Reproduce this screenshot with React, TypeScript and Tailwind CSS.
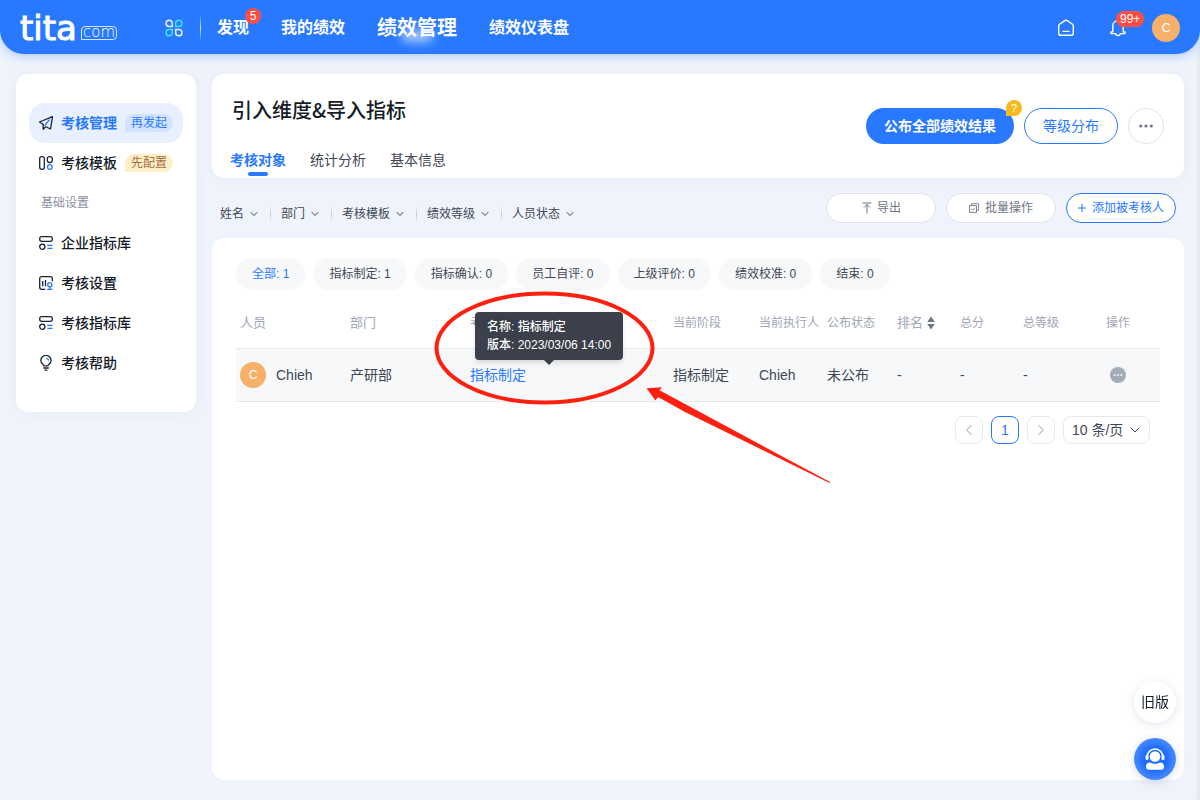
import React from 'react';
import { ChevronDown, ChevronLeft, ChevronRight } from 'lucide-react';

const navItems = [
    { name: '发现', badge: '5' },
    { name: '我的绩效' },
    { name: '绩效管理', active: true },
    { name: '绩效仪表盘' },
];

const filters = [
    { name: '姓名', width: 'w-10' },
    { name: '部门', width: 'w-10' },
    { name: '考核模板', width: 'w-16' },
    { name: '绩效等级', width: 'w-16' },
    { name: '人员状态', width: 'w-16' },
];

const stages = [
    { name: '全部', count: 1 },
    { name: '指标制定', count: 1 },
    { name: '指标确认', count: 0 },
    { name: '员工自评', count: 0 },
    { name: '上级评价', count: 0 },
    { name: '绩效校准', count: 0 },
    { name: '结束', count: 0 },
];

// Icons
const AppsIcon = () => (
    <svg width="18" height="18" viewBox="0 0 18 18" fill="none" strokeWidth="1.5">
        <path d="M4.2 1.2a3.1 3.1 0 1 0 0 6.3h3.1V4.3a3.1 3.1 0 0 0-3.1-3.1z" stroke="#e8f0ff" />
        <path d="M13.8 1.2a3.1 3.1 0 1 1 0 6.3h-3.1V4.3a3.1 3.1 0 0 1 3.1-3.1z" stroke="#3fe0ff" />
        <path d="M4.2 16.8a3.1 3.1 0 1 1 0-6.3h3.1v3.2a3.1 3.1 0 0 1-3.1 3.1z" stroke="#3fe0ff" />
        <path d="M13.8 16.8a3.1 3.1 0 1 0 0-6.3h-3.1v3.2a3.1 3.1 0 0 0 3.1 3.1z" stroke="#e8f0ff" />
    </svg>
);

const HomeIcon = () => (
    <svg width="18" height="18" viewBox="0 0 18 18" fill="none" stroke="#fff" strokeWidth="1.4" strokeLinecap="round" strokeLinejoin="round">
        <path d="M1.7 6.9c0-.7.3-1.2.8-1.6l5.3-3.7c.7-.5 1.7-.5 2.4 0l5.3 3.7c.5.4.8.9.8 1.6v7.3c0 1.2-.9 2.1-2.1 2.1H3.8c-1.2 0-2.1-.9-2.1-2.1z" />
        <path d="M6 12.4h6" />
    </svg>
);

const BellIcon = () => (
    <svg width="18" height="18" viewBox="0 0 18 18" fill="none" stroke="#fff" strokeWidth="1.4" strokeLinecap="round" strokeLinejoin="round">
        <path d="M9 1.8c-3 0-5.200 2.200-5.200 5v6L2 13v1.600h4.600c.3 1.400 1.200 2 2.400 2s2.100-.6 2.400-2H16V13l-1.800-.2v-6c0-2.800-2.200-5-5.200-5z" />
    </svg>
);

const PlaneIcon = () => (
    <svg width="16" height="16" viewBox="0 0 16 16" fill="none" stroke="#1b2333" strokeWidth="1.3" strokeLinejoin="round" strokeLinecap="round">
        <path d="M5 9.300 1.400 7 14.500 1.700l-2 12.300-4-2" />
        <path d="M5.200 9.500v4.800l2.300-2.300" />
        <path d="m11.200 5-4.200 5.200" stroke="#2879ff" />
    </svg>
);

const TemplateIcon = () => (
    <svg width="16" height="16" viewBox="0 0 16 16" fill="none" stroke="#1b2333" strokeWidth="1.3">
        <rect x="1.700" y="1.700" width="4.600" height="12.600" rx="2" />
        <path d="M9.300 3.700c0-1.200.9-2 2.400-2s2.600.8 2.600 2v1.500c0 1.400-1 2.300-2.500 2.300s-2.500-.9-2.500-2.300z" />
        <circle cx="11.800" cy="12" r="2.300" stroke="#2879ff" />
    </svg>
);

const LibraryIcon = () => (
    <svg width="16" height="16" viewBox="0 0 16 16" fill="none" stroke="#1b2333" strokeWidth="1.3">
        <rect x="1.700" y="1.700" width="12.600" height="4.600" rx="2" />
        <circle cx="4.300" cy="11.700" r="2.600" />
        <path d="M9.300 10.300h5.200M9.300 13.400h5.200" stroke="#2879ff" />
    </svg>
);

const SettingIcon = () => (
    <svg width="16" height="16" viewBox="0 0 16 16" fill="none" stroke="#1b2333" strokeWidth="1.300">
        <path d="M7.300 14.300H3.700a2 2 0 0 1-2-2V3.700c0-1.100.9-2 2-2h8.600a2 2 0 0 1 2 2v2.600" />
        <path d="M4.700 6v5.300M7.500 5v6.300" />
        <circle cx="11.800" cy="9.800" r="2.100" stroke="#2879ff" />
        <path d="M11.800 12v2.200M9.200 14.300h5.200" stroke="#2879ff" />
    </svg>
);

const BulbIcon = () => (
    <svg width="16" height="16" viewBox="0 0 16 16" fill="none" stroke="#1b2333" strokeWidth="1.300" strokeLinecap="round">
        <path d="M6 10.900c0-1.300-3.200-2-3.200-5.300a5.100 5.100 0 0 1 10.300 0c0 3.300-3.200 4-3.200 5.300z" strokeLinejoin="round" />
        <path d="M5.800 13h4.500M7 15.200h2" />
        <path d="M8.800 3.300c.9.200 1.500.8 1.700 1.700" stroke="#2879ff" />
    </svg>
);

const Badge = ({ text }: { text: string }) => (
    <span className="rounded-full bg-[#ff4d43] px-1 text-xs leading-4 text-white font-normal min-w-4 text-center">{text}</span>
);

const SideItem = ({ icon, name, tag }: { icon: React.ReactNode; name: string; tag?: React.ReactNode }) => (
    <a href="#" className="flex h-10 items-center rounded-2xl pl-[9px] text-sm font-medium text-[#141c28]">
        {icon}
        <span className="ml-[7px]">{name}</span>
        {tag}
    </a>
);

const Header = () => (
    <header className="relative z-10 flex h-[54px] items-center rounded-b-[24px] bg-[#2879ff] px-5 pt-0.5 text-white shadow-[0_3px_10px_rgba(40,121,255,0.3)]">
        <a href="#" className="flex items-end">
            <span className="font-['DejaVu_Sans'] text-[34px] leading-8 [-webkit-text-stroke:1px_white]">tita</span>
            <span className="mb-1 ml-1 flex h-[14px] items-center rounded-[4px] rounded-bl-none border border-white/80 px-px pb-0.5 font-['DejaVu_Sans'] text-[15px] font-extralight">com</span>
        </a>
        <button aria-label="应用" className="ml-12"><AppsIcon /></button>
        <span className="ml-[17px] h-7 w-px bg-linear-to-b from-white/0 via-white/80 to-white/0" />
        <nav className="ml-4 flex items-center gap-8">
            {navItems.map(item => (
                <a key={item.name} href="#" className={item.active ? 'relative text-xl font-bold' : 'relative text-base font-bold'}>
                    {item.active && <span className="absolute bottom-0 left-6 h-3 w-8 rounded-full bg-white/60 blur-[5px]" />}
                    <span className="relative">{item.name}</span>
                    {item.badge && <span className="absolute -top-2 -right-3 flex"><Badge text={item.badge} /></span>}
                </a>
            ))}
        </nav>
        <div className="ml-auto flex items-center">
            <button aria-label="首页"><HomeIcon /></button>
            <button aria-label="消息" className="relative ml-[34px]">
                <BellIcon />
                <span className="absolute -top-2 left-[7px] flex"><Badge text="99+" /></span>
            </button>
            <span className="ml-[25px] flex size-7 items-center justify-center rounded-full bg-[#f5b06a] text-xs">C</span>
        </div>
    </header>
);

const Sidebar = () => (
    <aside className="flex w-[180px] shrink-0 flex-col self-start rounded-xl bg-white px-[13px] pt-[29px] pb-[29px] shadow-[0_0_12px_rgba(60,90,160,0.05)]">
        <a href="#" className="flex h-10 items-center rounded-2xl bg-[#e8f0ff] pl-[9px] text-sm font-bold text-[#2879ff]">
            <PlaneIcon />
            <span className="ml-[7px]">考核管理</span>
            <span className="ml-2 rounded-[9px] rounded-bl-none bg-[#d2e2ff] px-1.5 text-xs leading-[18px] font-normal">再发起</span>
        </a>
        <SideItem
            icon={<TemplateIcon />}
            name="考核模板"
            tag={<span className="ml-2 rounded-[9px] rounded-bl-none bg-[#ffefc9] px-1.5 text-xs leading-[18px] font-normal text-[#a2703c]">先配置</span>}
        />
        <div className="flex h-10 items-center pl-3 text-xs text-[#89919f]">基础设置</div>
        <SideItem icon={<LibraryIcon />} name="企业指标库" />
        <SideItem icon={<SettingIcon />} name="考核设置" />
        <SideItem icon={<LibraryIcon />} name="考核指标库" />
        <SideItem icon={<BulbIcon />} name="考核帮助" />
    </aside>
);

const TitleCard = () => (
    <section className="flex items-center justify-between rounded-xl bg-white pr-5 pl-[18px] shadow-[0_0_12px_rgba(60,90,160,0.05)]">
        <div>
            <h1 className="mt-[21px] pl-0.5 font-['Noto_Sans_CJK_SC',sans-serif] text-xl leading-[30px] font-medium text-[#141c28]">引入维度&amp;导入指标</h1>
            <div className="mt-6 flex gap-6 text-sm leading-[22px] text-[#3f4755]">
                <a href="#" className="flex flex-col items-center font-bold text-[#2879ff]">
                    考核对象
                    <span className="mt-px mb-0.5 h-1 w-5 rounded-full bg-[#2879ff]" />
                </a>
                <a href="#">统计分析</a>
                <a href="#">基本信息</a>
            </div>
        </div>
        <div className="flex items-center gap-[10px] text-sm">
            <div className="relative">
                <button className="h-9 rounded-full bg-[#2879ff] px-[18px] font-bold text-white">公布全部绩效结果</button>
                <span className="absolute -top-2 -right-2 size-4 rounded-full rounded-bl-none bg-[#f7ba1e] text-center text-[11px] leading-4 text-white">?</span>
            </div>
            <button className="h-9 rounded-full border border-[#2879ff] px-[18px] text-[#2879ff]">等级分布</button>
            <button aria-label="更多" className="flex size-9 items-center justify-center rounded-full border border-[#dfe2e9]">
                <svg width="16" height="4" viewBox="0 0 16 4" fill="#6f7784">
                    <circle cx="2.700" cy="2" r="1.600" />
                    <circle cx="8" cy="2" r="1.600" />
                    <circle cx="13.300" cy="2" r="1.600" />
                </svg>
            </button>
        </div>
    </section>
);

const Toolbar = () => (
    <div className="flex items-end justify-between px-2 py-[15px] text-xs text-[#3f4755]">
        <div className="flex h-[18px] items-center">
            {filters.map((f, i) => (
                <React.Fragment key={f.name}>
                    {i > 0 && <span className="mx-[10px] h-4 w-px bg-linear-to-b from-[#d3d8e2]/0 via-[#c3c9d6] to-[#d3d8e2]/0" />}
                    <span className="relative flex items-center">
                        <select aria-label={f.name} className={`${f.width} appearance-none outline-none`}>
                            <option>{f.name}</option>
                        </select>
                        <ChevronDown size={12} strokeWidth={2} className="pointer-events-none absolute right-0" />
                    </span>
                </React.Fragment>
            ))}
        </div>
        <div className="flex gap-[10px] text-[#6f7784]">
            <button className="flex h-[30px] w-[110px] items-center justify-center gap-1 rounded-full border border-[#dfe2e9] bg-white">
                <svg width="12" height="12" viewBox="0 0 12 12" fill="none" stroke="currentColor">
                    <path d="M1.500 1h9M6 11.500V2.500M3 5.500l3-3 3 3" />
                </svg>
                导出
            </button>
            <button className="flex h-[30px] w-[110px] items-center justify-center gap-1.5 rounded-full border border-[#dfe2e9] bg-white">
                <svg width="10" height="10" viewBox="0 0 10 10" fill="none" stroke="currentColor" strokeWidth="0.9">
                    <path d="M2.500 2.500V.7h7v6.600H7.800M.6 2.600h6.900v6.800H.6z" />
                    <path d="m2.300 5.800 1.400 1.400L6 4.800" />
                </svg>
                批量操作
            </button>
            <button className="flex h-[30px] w-[110px] items-center justify-center gap-1.5 rounded-full border border-[#2879ff] bg-white text-[#2879ff]">
                <svg width="8" height="8" viewBox="0 0 8 8" stroke="currentColor"><path d="M4 0v8M0 4h8" /></svg>
                添加被考核人
            </button>
        </div>
    </div>
);

// Tooltip and hand-drawn callout hang off the template link
const TemplateLink = () => (
    <span className="relative inline-block leading-[22px]">
        <a href="#" className="text-[#2879ff]">指标制定</a>
        <span role="tooltip" className="absolute bottom-full left-[5px] z-10 mb-1 rounded bg-[#303640]/95 px-3 py-1.5 text-xs leading-[18px] font-medium whitespace-nowrap text-white shadow-md">
            名称: 指标制定<br />版本: 2023/03/06 14:00
            <svg width="10" height="5" viewBox="0 0 10 5" className="absolute top-full left-1/2 -translate-x-1/2" fill="#373d47"><path d="M0 0h10L5 5z" /></svg>
        </span>
        <svg width="410" height="200" viewBox="430 288 410 200" className="pointer-events-none absolute -top-[76px] -left-10 z-20 max-w-none">
            <ellipse cx="544.500" cy="348" rx="108" ry="54.500" fill="none" stroke="#ff2010" strokeWidth="4" />
            <path d="M646.500 388.300 662 387.300 659.500 390.300 830 482 829.500 483 685 412 658 397 655.500 400.500z" fill="#ff2010" />
        </svg>
    </span>
);

const MembersTable = () => (
    <table className="mt-2 w-full table-fixed text-left text-sm text-[#3f4755]">
        <colgroup>
            <col className="w-[110px]" />
            <col className="w-[120px]" />
            <col />
            <col className="w-[86px]" />
            <col className="w-[68px]" />
            <col className="w-[70px]" />
            <col className="w-[63px]" />
            <col className="w-[63px]" />
            <col className="w-[57px]" />
            <col className="w-[84px]" />
        </colgroup>
        <thead>
            <tr className="h-[50px] text-xs whitespace-nowrap text-[#9fa6b5] *:px-1 *:font-normal">
                <th className="text-[13px]">人员</th>
                <th className="text-[13px]">部门</th>
                <th>考核模板</th>
                <th>当前阶段</th>
                <th>当前执行人</th>
                <th>公布状态</th>
                <th className="text-[13px]">
                    <span className="flex items-center gap-1">
                        排名
                        <svg width="8" height="14" viewBox="0 0 8 14" fill="#6f7784"><path d="M4 .5 7.800 6H.2zM4 13.500.2 8h7.600z" /></svg>
                    </span>
                </th>
                <th>总分</th>
                <th>总等级</th>
                <th className="text-center">操作</th>
            </tr>
        </thead>
        <tbody>
            <tr className="h-[53px] border-y border-[#e6e9f0] bg-[#f7f8fa] *:px-1">
                <td>
                    <span className="flex items-center gap-[10px]">
                        <span className="flex size-[26px] items-center justify-center rounded-full bg-[#f5b06a] text-xs text-white">C</span>
                        Chieh
                    </span>
                </td>
                <td>产研部</td>
                <td><TemplateLink /></td>
                <td>指标制定</td>
                <td>Chieh</td>
                <td>未公布</td>
                <td>-</td>
                <td>-</td>
                <td>-</td>
                <td>
                    <button aria-label="操作" className="mx-auto block">
                        <svg width="16" height="16" viewBox="0 0 16 16">
                            <circle cx="8" cy="8" r="8" fill="#a3aab8" />
                            <path d="M3.700 7.200h1.800v1.600H3.700zM7.100 7.200h1.800v1.600H7.100zM10.500 7.200h1.800v1.600h-1.800z" fill="#fff" />
                        </svg>
                    </button>
                </td>
            </tr>
        </tbody>
    </table>
);

const Pagination = () => (
    <div className="mt-[14px] flex justify-end gap-2 pr-[10px] text-sm text-[#3f4755]">
        <button aria-label="上一页" className="flex size-7 items-center justify-center rounded-lg border border-[#e6e9f0] text-[#bcc2ce]"><ChevronLeft size={18} strokeWidth={1.5} /></button>
        <button className="size-7 rounded-lg border border-[#2879ff] text-[#2879ff]">1</button>
        <button aria-label="下一页" className="flex size-7 items-center justify-center rounded-lg border border-[#e6e9f0] text-[#bcc2ce]"><ChevronRight size={18} strokeWidth={1.5} /></button>
        <span className="relative flex items-center">
            <select aria-label="每页条数" className="h-7 w-[87px] appearance-none rounded-lg border border-[#e6e9f0] pl-2 outline-none">
                <option>10 条/页</option>
            </select>
            <ChevronDown size={16} strokeWidth={1.5} className="pointer-events-none absolute right-[7px]" />
        </span>
    </div>
);

export default function App() {
    return (
        <div className="flex min-h-screen flex-col bg-[#eff3fb] font-['Liberation_Sans','Noto_Sans_CJK_SC',sans-serif] shadow-[inset_-6px_0_6px_-5px_rgba(0,0,0,0.08)]">
            <Header />
            <div className="flex flex-1 gap-4 px-4 py-5">
                <Sidebar />
                <main className="flex min-w-0 flex-1 flex-col">
                    <TitleCard />
                    <Toolbar />
                    <section className="flex-1 rounded-xl bg-white px-6 pt-5">
                        <div className="flex gap-2 text-xs text-[#3f4755]">
                            {stages.map((s, i) => (
                                <button key={s.name} className={`h-8 rounded-full bg-[#f7f8fa] px-4 whitespace-nowrap ${i === 0 ? 'text-[#2879ff]' : ''}`}>
                                    {s.name}: {s.count}
                                </button>
                            ))}
                        </div>
                        <MembersTable />
                        <Pagination />
                    </section>
                </main>
            </div>

            {/* Floating actions */}
            <div className="fixed right-6 bottom-5 flex flex-col gap-[15px]">
                <button className="size-[42px] rounded-full bg-white text-sm text-[#141c28] shadow-[0_2px_10px_rgba(60,80,130,0.15)]">旧版</button>
                <button aria-label="客服" className="flex size-[42px] items-center justify-center rounded-full bg-radial from-[#1f6fff] from-40% to-[#6ba3ff] shadow-[0_2px_10px_rgba(60,80,130,0.2)]">
                    <svg width="22" height="24" viewBox="0 0 22 24" fill="none">
                        <path d="M3 10.500C3 5.500 6.500 2 11 2s8 3.500 8 8.500" stroke="#fff" strokeWidth="1.600" />
                        <rect x="1.500" y="8" width="3" height="5" rx="1.500" fill="#fff" />
                        <rect x="17.500" y="8" width="3" height="5" rx="1.500" fill="#fff" />
                        <circle cx="11" cy="9.500" r="5.300" fill="#fff" />
                        <path d="M2 19.500c0-2.600 1.700-4 4-4 1.500 1 3 1.300 5 1.300s3.500-.3 5-1.300c2.300 0 4 1.400 4 4 0 2-1 3.300-3 3.300H5c-2 0-3-1.300-3-3.300z" fill="#fff" />
                    </svg>
                </button>
            </div>
        </div>
    );
}
